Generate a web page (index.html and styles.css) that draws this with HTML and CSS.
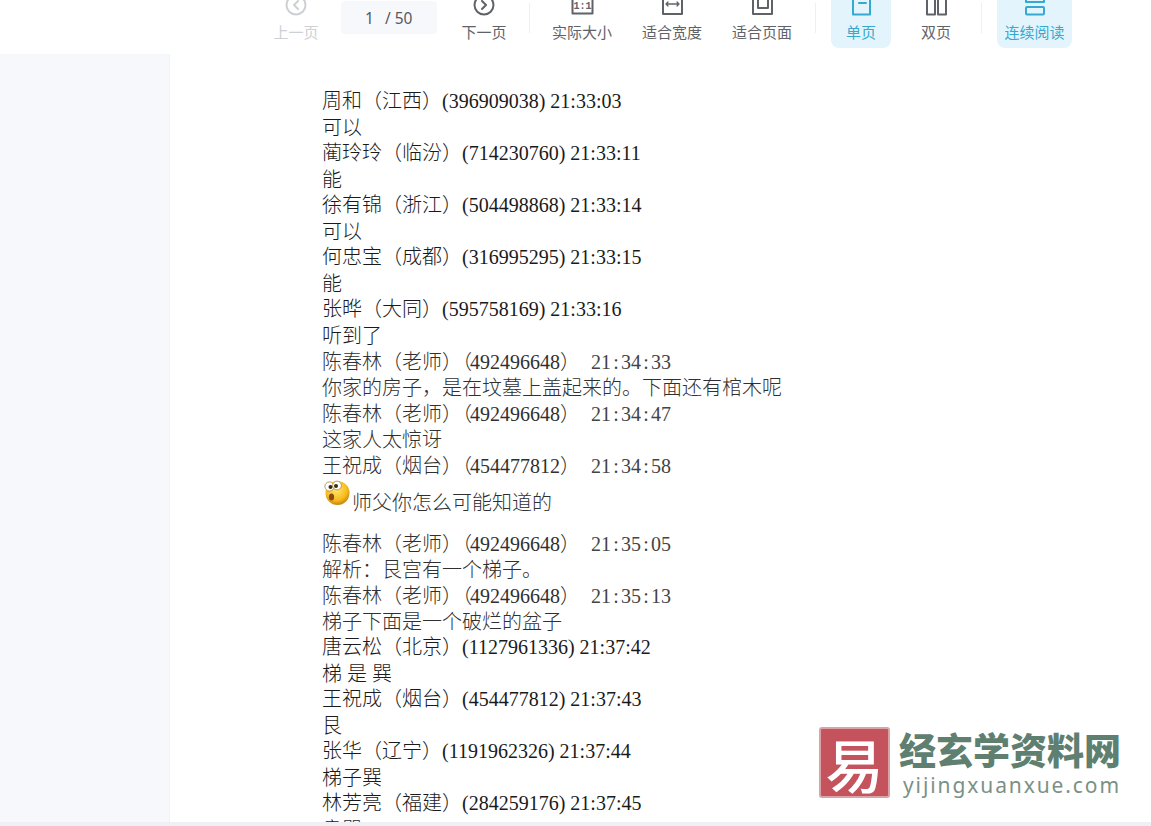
FILE: index.html
```html
<!DOCTYPE html>
<html lang="zh-CN">
<head>
<meta charset="utf-8">
<title>阅读器</title>
<link rel="stylesheet" href="styles.css">
</head>
<body>
<div class="app">
  <header class="toolbar">
    <div class="tool w64 disabled">
      <svg class="icon" viewBox="0 0 24 24"><circle cx="12" cy="12" r="9.5"/><path d="M14 8l-4 4 4 4"/></svg>
      <span>上一页</span>
    </div>
    <div class="pager"><span>1</span><span>/ 50</span></div>
    <div class="tool w64 gap15">
      <svg class="icon" viewBox="0 0 24 24"><circle cx="12" cy="12" r="9.5"/><path d="M10 8l4 4-4 4"/></svg>
      <span>下一页</span>
    </div>
    <div class="sep gap13"></div>
    <div class="tool w60 gap22">
      <svg class="icon" viewBox="0 0 24 24"><path d="M2.5 0v20.5h20V0"/><text x="12.5" y="15.5" class="icon-text">1:1</text></svg>
      <span>实际大小</span>
    </div>
    <div class="tool w60 gap30">
      <svg class="icon" viewBox="0 0 24 24"><path d="M3 0v21h19V0"/><path class="thin" d="M6 11h13M8 9l-2 2 2 2M17 9l2 2-2 2"/></svg>
      <span>适合宽度</span>
    </div>
    <div class="tool w60 gap30">
      <svg class="icon" viewBox="0 0 24 24"><path d="M3 0v21h19V0"/><path d="M8 0v15h10V0"/></svg>
      <span>适合页面</span>
    </div>
    <div class="sep gap23"></div>
    <div class="tool w60 gap15 active">
      <svg class="icon" viewBox="0 0 24 24"><path d="M4 0v21.5h17V0"/><path d="M10 10h7"/></svg>
      <span>单页</span>
    </div>
    <div class="tool w60 gap15">
      <svg class="icon" viewBox="0 0 24 24"><path d="M3 0v21.5h8V0M14 0v21.5h8V0"/></svg>
      <span>双页</span>
    </div>
    <div class="sep gap15"></div>
    <div class="tool w75 gap15 active">
      <svg class="icon" viewBox="0 0 24 24"><path d="M3 0v9h18V0"/><rect x="3" y="14" width="18" height="7.5" rx="1"/></svg>
      <span>连续阅读</span>
    </div>
  </header>

  <div class="body">
    <aside class="sidebar"></aside>
    <main class="page">
      <p>周和（江西）(396909038) 21:33:03</p>
      <p class="cn">可以</p>
      <p>蔺玲玲（临汾）(714230760) 21:33:11</p>
      <p class="cn">能</p>
      <p>徐有锦（浙江）(504498868) 21:33:14</p>
      <p class="cn">可以</p>
      <p>何忠宝（成都）(316995295) 21:33:15</p>
      <p class="cn">能</p>
      <p>张晔（大同）(595758169) 21:33:16</p>
      <p class="cn">听到了</p>
      <p class="alt cn">陈春林（老师）（<span class="qq">492496648</span>）<span class="time">21<span class="colon">:</span>34<span class="colon">:</span>33</span></p>
      <p class="alt cn">你家的房子，是在坟墓上盖起来的。下面还有棺木呢</p>
      <p class="alt cn">陈春林（老师）（<span class="qq">492496648</span>）<span class="time">21<span class="colon">:</span>34<span class="colon">:</span>47</span></p>
      <p class="alt cn">这家人太惊讶</p>
      <p class="alt cn">王祝成（烟台）（<span class="qq">454477812</span>）<span class="time">21<span class="colon">:</span>34<span class="colon">:</span>58</span></p>
      <p class="alt emoji-line">
        <svg class="emoji" viewBox="0 0 27 27">
          <defs>
            <radialGradient id="ball" cx="0.45" cy="0.35" r="0.7">
              <stop offset="0" stop-color="#ffe96a"/>
              <stop offset="0.65" stop-color="#f8b91c"/>
              <stop offset="1" stop-color="#b9780c"/>
            </radialGradient>
          </defs>
          <circle cx="14.5" cy="14" r="12" fill="url(#ball)"/>
          <circle cx="6.5" cy="7.5" r="4.6" fill="#fff" stroke="#a8843a" stroke-width="0.8"/>
          <circle cx="14" cy="6.5" r="4.4" fill="#fff" stroke="#a8843a" stroke-width="0.8"/>
          <circle cx="7.5" cy="8" r="2" fill="#3a2a10"/>
          <circle cx="13" cy="7" r="2" fill="#3a2a10"/>
          <ellipse cx="8.5" cy="18" rx="2.6" ry="3.6" fill="#8a4b12"/>
        </svg>
        <span>师父你怎么可能知道的</span>
      </p>
      <p class="alt cn">陈春林（老师）（<span class="qq">492496648</span>）<span class="time">21<span class="colon">:</span>35<span class="colon">:</span>05</span></p>
      <p class="alt cn">解析：艮宫有一个梯子。</p>
      <p class="alt cn">陈春林（老师）（<span class="qq">492496648</span>）<span class="time">21<span class="colon">:</span>35<span class="colon">:</span>13</span></p>
      <p class="alt cn">梯子下面是一个破烂的盆子</p>
      <p>唐云松（北京）(1127961336) 21:37:42</p>
      <p class="cn">梯 是 巽</p>
      <p>王祝成（烟台）(454477812) 21:37:43</p>
      <p class="cn">艮</p>
      <p>张华（辽宁）(1191962326) 21:37:44</p>
      <p class="cn">梯子巽</p>
      <p>林芳亮（福建）(284259176) 21:37:45</p>
      <p class="cn">良巽</p>
    </main>
  </div>
  <div class="footer-strip"></div>

  <div class="watermark">
    <div class="seal"><span>易</span></div>
    <div class="brand">
      <div class="brand-name">经玄学资料网</div>
      <div class="brand-url">yijingxuanxue.com</div>
    </div>
  </div>
</div>
</body>
</html>
```

FILE: styles.css
```css
* { box-sizing: border-box; }

html, body {
  margin: 0;
  height: 100%;
  overflow: hidden;
  background: #fff;
}

.app {
  position: relative;
  height: 826px;
  display: flex;
  flex-direction: column;
  overflow: hidden;
}

.toolbar {
  flex: 0 0 54px;
  display: flex;
  align-items: flex-start;
  padding-left: 264px;
  background: #fff;
  overflow: hidden;
  font-family: "Noto Sans CJK SC", "Noto Sans", sans-serif;
}

.tool {
  height: 48px;
  display: flex;
  flex-direction: column;
  align-items: center;
  font-size: 15px;
  line-height: 20px;
  color: #5f6368;
  border-radius: 0 0 8px 8px;
}

.tool span { margin-top: 5px; }

.w60 { width: 60px; }
.w64 { width: 64px; }
.w75 { width: 75px; }
.gap13 { margin-left: 13px; }
.gap15 { margin-left: 15px; }
.gap22 { margin-left: 22px; }
.gap23 { margin-left: 23px; }
.gap30 { margin-left: 30px; }

.icon {
  flex: 0 0 24px;
  width: 24px;
  height: 24px;
  margin-top: -7px;
  overflow: visible;
  fill: none;
  stroke: currentColor;
  stroke-width: 2;
  stroke-linecap: round;
  stroke-linejoin: round;
}

.icon .thin { stroke-width: 1.3; }

.icon-text {
  font-family: "Liberation Mono", monospace;
  font-size: 10px;
  font-weight: 700;
  text-anchor: middle;
  fill: currentColor;
  stroke: none;
}

.disabled { color: #cdd0d4; }

.active {
  background: #e3f4fd;
  color: #35a9cf;
}

.pager {
  width: 96px;
  height: 33px;
  margin: 1px 0 0 13px;
  padding-left: 24px;
  display: flex;
  align-items: center;
  gap: 11px;
  border-radius: 4px;
  background: #f6f8fc;
  color: #555a60;
  font-family: "Noto Sans", sans-serif;
  font-size: 15.5px;
}

.sep {
  width: 1px;
  height: 30px;
  margin-top: 3px;
  background: #eeeff1;
}

.body {
  flex: 1 1 0;
  min-height: 0;
  display: flex;
  overflow: hidden;
}

.sidebar {
  flex: 0 0 170px;
  background: #f7f8fc;
  border-right: 1px solid #f1f2f6;
}

.page {
  flex: 1 1 0;
  padding: 34px 0 0 152px;
  background: #fff;
  color: #1a1a1a;
  font-family: "Liberation Serif", "Noto Sans CJK SC", serif;
  font-size: 20px;
  font-weight: 300;
  line-height: 26px;
}

.page p {
  margin: 0;
  height: 26px;
  white-space: nowrap;
}

.page p.cn { padding-top: 1px; }

.page p.alt { color: #303030; }

.qq { margin-left: -2px; }

.time {
  margin-left: 11px;
  color: #444;
}

.colon { padding: 0 2.2px; }

.page p.emoji-line {
  height: 52px;
  display: flex;
  align-items: flex-start;
  padding-left: 1px;
}

.emoji {
  flex: 0 0 27px;
  width: 27px;
  height: 27px;
  margin-top: 1px;
}

.emoji-line span {
  margin: 12px 0 0 2px;
}

.footer-strip {
  flex: 0 0 4px;
  background: #eff0f6;
}

.watermark {
  position: absolute;
  left: 819px;
  top: 727px;
  display: flex;
  gap: 9px;
}

.seal {
  width: 71px;
  height: 71px;
  display: flex;
  align-items: center;
  justify-content: center;
  background: #c5535d;
  border: 2px solid #dca3a6;
  border-radius: 3px;
  color: #fff;
  font-family: "Noto Sans CJK SC", sans-serif;
  font-size: 58px;
  font-weight: 500;
  line-height: 1;
}

.brand {
  display: flex;
  flex-direction: column;
  color: #5f7f70;
}

.brand-name {
  font-family: "Noto Sans CJK SC", sans-serif;
  font-size: 37px;
  font-weight: 900;
  line-height: 40px;
  margin-top: 2px;
  white-space: nowrap;
}

.brand-url {
  font-family: "Noto Sans", sans-serif;
  font-size: 21px;
  line-height: 26px;
  letter-spacing: 1.9px;
  margin: 3px 0 0 4px;
  color: #7a9186;
  white-space: nowrap;
}
```
